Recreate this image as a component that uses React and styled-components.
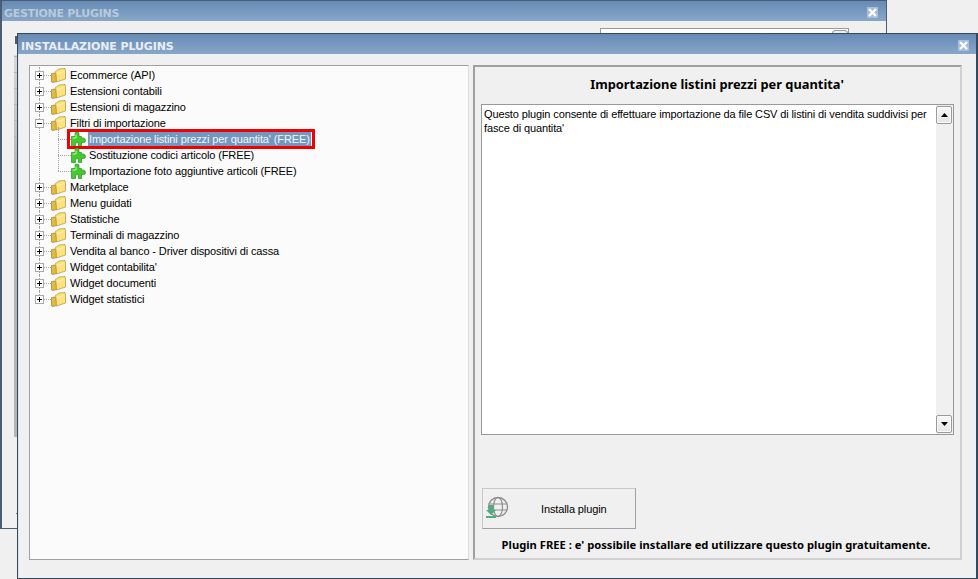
import styled, { createGlobalStyle } from 'styled-components';

const GlobalStyle = createGlobalStyle`
	html, body {
		margin: 0;
		padding: 0;
		background: #f0f0f0;
		overflow: hidden;
	}
	body {
		font-family: 'Liberation Sans', Arial, sans-serif;
		font-size: 11px;
		letter-spacing: -0.12px;
		color: #000;
	}
`;

const TREE = [
	{ label: 'Ecommerce (API)' },
	{ label: 'Estensioni contabili' },
	{ label: 'Estensioni di magazzino' },
	{
		label: 'Filtri di importazione',
		open: true,
		children: [
			{ label: "Importazione listini prezzi per quantita' (FREE)", selected: true },
			{ label: 'Sostituzione codici articolo (FREE)' },
			{ label: 'Importazione foto aggiuntive articoli (FREE)' },
		],
	},
	{ label: 'Marketplace' },
	{ label: 'Menu guidati' },
	{ label: 'Statistiche' },
	{ label: 'Terminali di magazzino' },
	{ label: 'Vendita al banco - Driver dispositivi di cassa' },
	{ label: "Widget contabilita'" },
	{ label: 'Widget documenti' },
	{ label: 'Widget statistici' },
];

function CloseIcon() {
	return (
		<CloseButton>
			<svg width="9" height="9" viewBox="0 0 9 9">
				<path d="M1 1 L8 8 M8 1 L1 8" stroke="#fff" strokeWidth="2.2" />
			</svg>
		</CloseButton>
	);
}

function FolderIcon() {
	return (
		<svg width="15" height="15" viewBox="0 0 15 15">
			<path d="M0.5 5.5 L5 5 L5.5 13.5 L2 14.5 Q0.5 14.5 0.5 13 Z" fill="#e3b93f" stroke="#a88a3c" strokeWidth="0.8" />
			<path d="M4 4 L8 1 L14 0.5 L14.5 3 L14.5 11 L5.5 14 L5 6 Z" fill="#ffe27c" stroke="#b59a4a" strokeWidth="0.8" />
			<path d="M6 6 L13.5 3.5" stroke="#fff3b8" strokeWidth="1" />
		</svg>
	);
}

function PuzzleIcon() {
	return (
		<svg width="15" height="16" viewBox="0 0 15 16">
			<path
				d="M0.5 5.5 H4 V3.5 Q3.5 1 6 1 Q8.5 1 8 3.5 V5.5 H10.5 V7.5 Q11 7 12.5 7 Q14.5 7.5 14.5 9.5 Q14.5 11.5 12.5 11.5 Q11 11.5 10.5 11 V15.5 H7.5 V13 Q7.5 11.5 6 11.5 Q4.5 11.5 4.5 13 V15.5 H0.5 Z"
				fill="#46c92c"
				stroke="#2a8f2c"
				strokeWidth="0.7"
			/>
			<path d="M1.5 7 H5 V3.5" stroke="#bdf5a8" strokeWidth="1" fill="none" />
		</svg>
	);
}

function InstallIcon() {
	return (
		<IconBox>
			<svg width="24" height="24" viewBox="0 0 24 24" fill="none">
				<circle cx="13" cy="11" r="9.5" stroke="#8d8d8d" strokeWidth="1.4" />
				<ellipse cx="13" cy="11" rx="4.5" ry="9.5" stroke="#8d8d8d" strokeWidth="1.2" />
				<path d="M4 8 H22 M4 14 H22" stroke="#8d8d8d" strokeWidth="1.2" />
				<path d="M4 9 H8 V14 H11 L6 19 L1 14 H4 Z" fill="#4fae7f" />
				<rect x="1" y="20" width="10" height="2" fill="#4fae7f" />
			</svg>
		</IconBox>
	);
}

function App() {
	return (
		<>
			<GlobalStyle />
			<Desktop>
				<BackWindow>
					<TitleBar>
						<BackTitle>GESTIONE PLUGINS</BackTitle>
						<CloseIcon />
					</TitleBar>
					<BackBody>
						<BackField>
							<BackFieldButton />
						</BackField>
						<BackSliver />
					</BackBody>
				</BackWindow>
				<FrontWindow>
					<FrontTitleBar>
						<FrontTitle>INSTALLAZIONE PLUGINS</FrontTitle>
						<CloseIcon />
					</FrontTitleBar>
					<FrontBody>
						<TreePanel>
							{TREE.map((node, index) => (
								<TreeGroup key={node.label} $last={index === TREE.length - 1}>
									<TreeRow>
										<Expander $open={node.open} />
										<Connector />
										<FolderIcon />
										<RootLabel>{node.label}</RootLabel>
									</TreeRow>
									{node.children && (
										<ChildList>
											{node.children.map((child) => (
												<ChildRow key={child.label}>
													<ChildConnector />
													<ChildBody $selected={child.selected}>
														<PuzzleIcon />
														<ChildLabel $selected={child.selected}>{child.label}</ChildLabel>
													</ChildBody>
												</ChildRow>
											))}
										</ChildList>
									)}
								</TreeGroup>
							))}
						</TreePanel>
						<DetailPanel>
							<DetailTitle>Importazione listini prezzi per quantita'</DetailTitle>
							<Memo>
								<MemoText>
									Questo plugin consente di effettuare importazione da file CSV di listini di vendita suddivisi per fasce di quantita'
								</MemoText>
								<ScrollTrack>
									<ScrollButton>
										<svg width="7" height="4" viewBox="0 0 7 4">
											<path d="M3.5 0 L7 4 H0 Z" fill="#000" />
										</svg>
									</ScrollButton>
									<ScrollButton>
										<svg width="7" height="4" viewBox="0 0 7 4">
											<path d="M0 0 H7 L3.5 4 Z" fill="#000" />
										</svg>
									</ScrollButton>
								</ScrollTrack>
							</Memo>
							<InstallButton type="button">
								<InstallIcon />
								<InstallLabel>Installa plugin</InstallLabel>
							</InstallButton>
							<FreeNote>Plugin FREE : e' possibile installare ed utilizzare questo plugin gratuitamente.</FreeNote>
						</DetailPanel>
					</FrontBody>
				</FrontWindow>
			</Desktop>
		</>
	);
}

const Desktop = styled.div`
	position: relative;
	width: 978px;
	height: 579px;
	overflow: hidden;
	background: #f0f0f0;
`;

const BackWindow = styled.section`
	position: absolute;
	left: 0;
	top: 0;
	width: 887px;
	height: 529px;
	box-sizing: border-box;
	display: flex;
	flex-direction: column;
	border: 1px solid #4a5d75;
	border-left-width: 2px;
	background: #f0f0f0;
`;

const FrontWindow = styled.section`
	position: absolute;
	left: 17px;
	top: 33px;
	width: 961px;
	height: 546px;
	box-sizing: border-box;
	display: flex;
	flex-direction: column;
	border: 1px solid #33495f;
	border-right-width: 2px;
	background: #f0f0f0;
	box-shadow: inset 1px 0 0 #dbe6f1;
`;

const TitleBar = styled.header`
	flex: none;
	height: 20px;
	display: flex;
	align-items: center;
	justify-content: space-between;
	padding: 0 8px 0 2px;
	background: linear-gradient(#668bb5, #88a6c9);
`;

const FrontTitleBar = styled(TitleBar)`
	padding: 0 7px 0 3px;
`;

const BackTitle = styled.h1`
	margin: 0;
	padding-top: 4px;
	font: bold 11px 'DejaVu Sans', sans-serif;
	letter-spacing: -0.3px;
	color: #b9cadc;
`;

const FrontTitle = styled(BackTitle)`
	letter-spacing: -0.1px;
	color: #e9eff6;
`;

const CloseButton = styled.span`
	margin-top: 2px;
	width: 11px;
	height: 11px;
	display: flex;
	align-items: center;
	justify-content: center;
	background: #a9bfd8;
`;

const BackBody = styled.div`
	position: relative;
	flex: 1;
`;

const BackField = styled.div`
	position: absolute;
	left: 598px;
	top: 7px;
	width: 249px;
	height: 20px;
	box-sizing: border-box;
	border: 1px solid #999;
	background: #fff;
`;

const BackFieldButton = styled.div`
	position: absolute;
	right: 0;
	top: 1px;
	width: 14px;
	height: 14px;
	border: 1px solid #999;
	border-radius: 3px;
	background: #eee;
`;

const BackSliver = styled.div`
	position: absolute;
	left: 12px;
	top: 34px;
	width: 3px;
	height: 382px;
	background-image: repeating-linear-gradient(#b4b4b4 0 1px, transparent 1px 16px),
		linear-gradient(#d8d8d8 0, #b5b5b5 30%);
	background-size: 100% 16px, 100% 100%;
	background-position: 0 1px, 0 0;

	&::before {
		content: '';
		position: absolute;
		left: 1px;
		top: -19px;
		width: 2px;
		height: 8px;
		background: #5a5a6a;
	}

	&::after {
		content: '';
		position: absolute;
		left: 2px;
		top: 458px;
		width: 1px;
		height: 1px;
		background: #777;
	}
`;

const FrontBody = styled.div`
	flex: 1;
	display: flex;
	gap: 4px;
	padding: 11px 14px 18px 11px;
	min-height: 0;
`;

const TreePanel = styled.div`
	width: 440px;
	box-sizing: border-box;
	padding: 1px 0 0 5px;
	border: 1px solid #a0a0a0;
	border-right-color: #dcdcdc;
	background: #fbfbfb;
`;

const TreeGroup = styled.div`
	position: relative;

	&::before {
		content: '';
		position: absolute;
		left: 4px;
		top: 0;
		bottom: ${(props) => (props.$last ? '8px' : '0')};
		border-left: 1px dotted #a0a0a0;
	}
`;

const TreeRow = styled.div`
	position: relative;
	height: 16px;
	display: flex;
	align-items: center;
`;

const Expander = styled.span`
	position: relative;
	z-index: 1;
	width: 9px;
	height: 9px;
	box-sizing: border-box;
	border: 1px solid #a8a8a8;
	background: #fff;

	&::before {
		content: '';
		position: absolute;
		left: 1px;
		top: 3px;
		width: 5px;
		height: 1px;
		background: #000;
	}

	&::after {
		content: '';
		position: absolute;
		left: 3px;
		top: 1px;
		width: 1px;
		height: 5px;
		background: ${(props) => (props.$open ? 'transparent' : '#000')};
	}
`;

const Connector = styled.span`
	width: 7px;
	border-top: 1px dotted #a0a0a0;
`;

const RootLabel = styled.span`
	margin-left: 4px;
	white-space: nowrap;
	line-height: 16px;
`;

const ChildList = styled.div`
	position: relative;
	padding-left: 23px;

	&::before {
		content: '';
		position: absolute;
		left: 23px;
		top: -4px;
		bottom: 8px;
		border-left: 1px dotted #a0a0a0;
	}
`;

const ChildRow = styled.div`
	height: 16px;
	display: flex;
	align-items: center;
`;

const ChildConnector = styled.span`
	width: 13px;
	flex: none;
	border-top: 1px dotted #a0a0a0;
`;

const ChildBody = styled.div`
	position: relative;
	height: 16px;
	display: flex;
	align-items: center;

	${(props) =>
		props.$selected &&
		`
		&::after {
			content: '';
			position: absolute;
			left: -4px;
			right: -4px;
			top: -2px;
			bottom: -2px;
			border: 3px solid #f00000;
		}
	`}
`;

const ChildLabel = styled.span`
	margin-left: 2px;
	padding: 0 1px;
	white-space: nowrap;
	line-height: 14px;
	background: ${(props) => (props.$selected ? '#7397bf' : 'transparent')};
	color: ${(props) => (props.$selected ? '#f4f7fa' : '#000')};
`;

const DetailPanel = styled.div`
	width: 489px;
	box-sizing: border-box;
	display: flex;
	flex-direction: column;
	padding: 0 7px 0 6px;
	border: 2px solid #d0d0d0;
	border-top-color: #a0a0a0;
	border-left-color: #a0a0a0;
	background: #f0f0f0;
`;

const DetailTitle = styled.h2`
	flex: none;
	margin: 0;
	height: 37px;
	box-sizing: border-box;
	padding-bottom: 3px;
	display: flex;
	align-items: center;
	justify-content: center;
	font: bold 12.85px 'Noto Sans', sans-serif;
	letter-spacing: normal;
`;

const Memo = styled.div`
	flex: none;
	height: 331px;
	width: 473px;
	box-sizing: border-box;
	display: flex;
	justify-content: space-between;
	border: 1px solid #999;
	background: #fff;
`;

const MemoText = styled.p`
	margin: 0;
	padding: 2px 0 0 2px;
	width: 450px;
	line-height: 14px;
`;

const ScrollTrack = styled.div`
	width: 17px;
	padding: 1px 1px 1px 0;
	box-sizing: border-box;
	display: flex;
	flex-direction: column;
	justify-content: space-between;
	background: #f0f0f0;
`;

const ScrollButton = styled.span`
	height: 18px;
	box-sizing: border-box;
	display: flex;
	align-items: center;
	justify-content: center;
	border: 1px solid #9a9a9a;
	border-radius: 2px;
	background: linear-gradient(#f8f8f8, #e4e4e4);
	box-shadow: inset 0 0 0 1px #fafafa;
`;

const InstallButton = styled.button`
	flex: none;
	margin: 53px 0 0 1px;
	width: 154px;
	height: 41px;
	box-sizing: border-box;
	padding: 0 0 0 2px;
	display: flex;
	align-items: center;
	border: 1px solid #c8c8c8;
	border-right-color: #a0a0a0;
	border-bottom-color: #a0a0a0;
	background: #f0f0f0;
	font: inherit;
	letter-spacing: inherit;
	color: #000;
`;

const IconBox = styled.span`
	display: flex;
	margin-bottom: 2px;
`;

const InstallLabel = styled.span`
	margin-left: 32px;
`;

const FreeNote = styled.p`
	margin: 8px 2px 0 0;
	text-align: center;
	white-space: nowrap;
	font: bold 11.2px 'Noto Sans', sans-serif;
	letter-spacing: normal;
`;

export default App;
